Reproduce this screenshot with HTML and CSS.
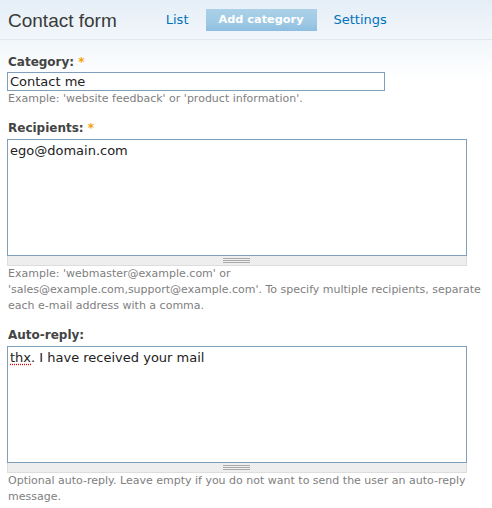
FILE: index.html
```html
<!DOCTYPE html>
<html lang="en">
<head>
    <meta charset="UTF-8">
    <title>Contact form</title>
    <link rel="stylesheet" href="styles.css">
</head>
<body>
    <div id="header">
        <h1>Contact form</h1>
        <ul class="tabs">
            <li><a href="#">List</a></li>
            <li class="active"><a href="#">Add category</a></li>
            <li><a href="#">Settings</a></li>
        </ul>
    </div>

    <form id="content">
        <div class="form-item">
            <label>Category: <span class="required">*</span></label>
            <input class="form-text" type="text" value="Contact me">
            <div class="description">Example: 'website feedback' or 'product information'.</div>
        </div>

        <div class="form-item">
            <label>Recipients: <span class="required">*</span></label>
            <div class="textarea">ego@domain.com</div>
            <div class="grippie"></div>
            <div class="description">Example: 'webmaster@example.com' or<br>'sales@example.com,support@example.com'. To specify multiple recipients, separate each e-mail address with a comma.</div>
        </div>

        <div class="form-item">
            <label>Auto-reply:</label>
            <div class="textarea"><span class="misspelled">thx</span>. I have received your mail</div>
            <div class="grippie"></div>
            <div class="description">Optional auto-reply. Leave empty if you do not want to send the user an auto-reply message.</div>
        </div>
    </form>
</body>
</html>
```

FILE: styles.css
```css
body {
    margin: 0;
    padding: 0;
    font-family: "DejaVu Sans", Verdana, sans-serif;
    color: #333;
    background: linear-gradient(#e5eef7 0px, #f1f6fa 38px, #ffffff 80px) no-repeat;
    overflow: hidden;
}

#header {
    display: flex;
    align-items: center;
    height: 39px;
    padding: 0 8px;
    border-bottom: 1px solid #dfe7ef;
}

h1 {
    margin: 0;
    font-family: "Liberation Sans", Arial, sans-serif;
    font-weight: normal;
    font-size: 19px;
    color: #3a3a3a;
    padding-top: 2px;
}

.tabs {
    display: flex;
    list-style: none;
    margin: 0 0 0 36px;
    padding: 0;
    gap: 4px;
}

.tabs a {
    display: block;
    padding: 0 13px;
    height: 22px;
    line-height: 22px;
    font-size: 13px;
    color: #0073ba;
    text-decoration: none;
}

.tabs .active a {
    background: linear-gradient(#abd1e8, #9cc7e3 70%, #8cbde0);
    color: #fff;
    font-weight: bold;
    font-size: 11.3px;
}

#content {
    padding: 14px 0 0 8px;
}

.form-item {
    margin-bottom: 13px;
}

label {
    display: block;
    font-size: 12px;
    font-weight: bold;
    line-height: 16px;
    color: #444;
    margin-bottom: 2px;
}

.required {
    color: #f5a300;
}

.form-text {
    display: block;
    box-sizing: border-box;
    width: 378px;
    height: 19px;
    margin: 0 0 0 -1px;
    padding: 0 2px;
    border: 1px solid #7f9fbd;
    font-family: "DejaVu Sans", Verdana, sans-serif;
    font-size: 13px;
    color: #222;
    background: #fff;
}

.textarea {
    box-sizing: border-box;
    width: 460px;
    height: 117px;
    margin-left: -1px;
    margin-top: 3px;
    padding: 3px 2px;
    border: 1px solid #7f9fbd;
    background: #fff;
    font-size: 13px;
    line-height: 16px;
    color: #222;
}

.misspelled {
    text-decoration: underline dotted #e00000;
    text-underline-offset: 2px;
}

.grippie {
    box-sizing: border-box;
    width: 460px;
    height: 10px;
    margin-left: -1px;
    background: #eee;
    border: 1px solid #ddd;
    border-top: none;
    position: relative;
}

.grippie::after {
    content: "";
    position: absolute;
    left: 215px;
    top: 2px;
    width: 27px;
    height: 3px;
    border-top: 1px solid #aaa;
    border-bottom: 1px solid #aaa;
    background: linear-gradient(#eee 1px, #aaa 1px, #aaa 2px, #eee 2px);
}

.description {
    font-size: 11px;
    line-height: 16px;
    color: #808080;
}
```
